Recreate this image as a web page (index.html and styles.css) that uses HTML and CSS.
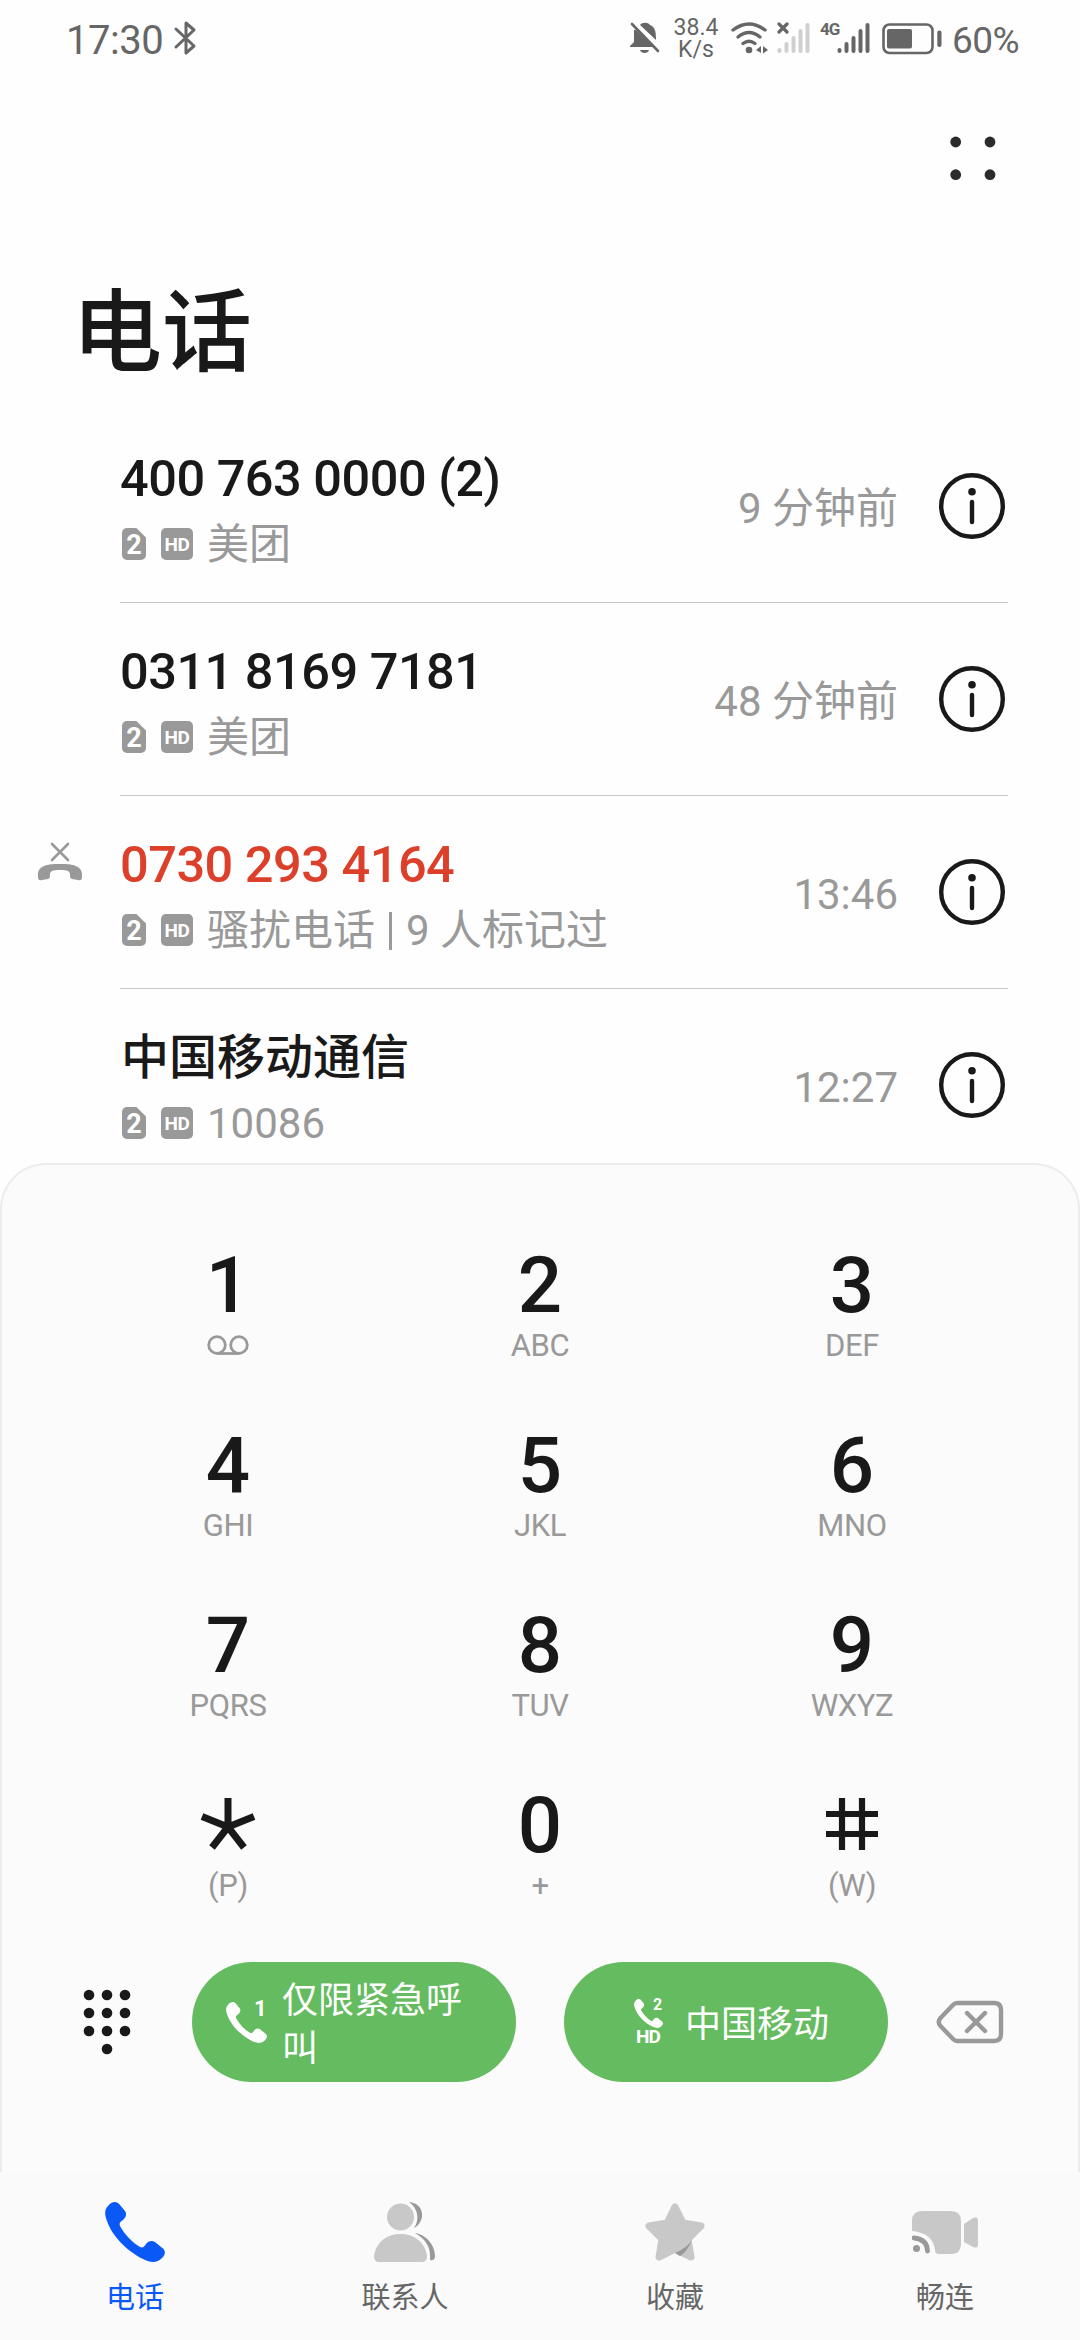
FILE: index.html
```html
<!DOCTYPE html>
<html lang="zh-CN">

<head>
    <meta charset="UTF-8">
    <meta name="viewport" content="width=device-width, initial-scale=1.0">
    <title>电话</title>
    <link rel="stylesheet" href="styles.css">
</head>

<body>
    <!-- shared icons -->
    <svg class="sprite" width="0" height="0">
        <symbol id="icon-info" viewBox="0 0 66 66">
            <circle cx="33" cy="33" r="30.8" fill="none" stroke="#191919" stroke-width="4.4" />
            <circle cx="33" cy="18.7" r="3.8" fill="#191919" />
            <path d="M33 29V49" stroke="#191919" stroke-width="4.4" stroke-linecap="round" />
        </symbol>
        <symbol id="icon-phone" viewBox="0 0 60 60">
            <path d="M3 4C7-1 12-1 15 3L20 9C22 12 21 15 18 18C15 20 14 21 15 24C20 33 27 40 35 45C38 46 39 45 41 42C43 39 47 38 50 40L56 45C61 48 61 52 57 56C52 61 46 61 38 57C22 49 7 34 2 19C-1 12 0 7 3 4Z" />
        </symbol>
    </svg>

    <div class="phone">
        <div class="status-bar">
            <span class="clock">17:30</span>
            <svg class="bluetooth" width="24" height="36" viewBox="0 0 24 36">
                <path d="M3 9L21 26L13 33V3L21 10L3 27" />
            </svg>
            <div class="status-right">
                <svg class="bell" width="30" height="32" viewBox="0 0 30 32">
                    <path d="M10 3C12 0 18 0 20 3C25 5 26 9 26 18L10 3ZM4 8C6 8 6 8 6 8L24 25H0V24L4 20Z" fill="#666" />
                    <path d="M2 2L28 29" stroke="#666" stroke-width="2.6" stroke-linecap="round" />
                    <path d="M10 28H19C18 32 11 32 10 28Z" fill="#666" />
                </svg>
                <div class="speed">
                    <div>38.4</div>
                    <div>K/s</div>
                </div>
                <svg class="wifi" width="38" height="32" viewBox="0 0 38 32">
                    <g fill="none" stroke="#666" stroke-width="3.4" stroke-linecap="round">
                        <path d="M2 8Q18 -4 34 8" />
                        <path d="M7 15Q18 6 29 15" />
                        <path d="M12 21.500Q18 17 24 21.500" />
                    </g>
                    <circle cx="18" cy="28" r="3.3" fill="#666" />
                    <path d="M30 24V31L25 28ZM32 24L37 28L32 31.500Z" fill="#666" />
                </svg>
                <svg class="signal-off" width="33" height="32" viewBox="0 0 33 32">
                    <path d="M2 2L10 10M10 2L2 10" stroke="#666" stroke-width="3.2" stroke-linecap="round" />
                    <path d="M2.500 28V29M9.500 22V29M16.500 16V29M23.500 9V29M30.500 3V29" stroke="#d0d0d0" stroke-width="4" stroke-linecap="round" />
                </svg>
                <span class="net">4G</span>
                <svg class="signal" width="33" height="32" viewBox="0 0 33 32">
                    <path d="M2.500 28V29M9.500 22V29M16.500 16V29M23.500 9V29M30.500 3V29" stroke="#666" stroke-width="4" stroke-linecap="round" />
                </svg>
                <svg class="battery" width="60" height="32" viewBox="0 0 60 32">
                    <rect x="1.500" y="1.500" width="49" height="28.500" rx="6" fill="none" stroke="#666" stroke-width="2.600" />
                    <rect x="5" y="6" width="25" height="19.500" rx="2" fill="#666" />
                    <rect x="55.300" y="7.500" width="4.200" height="16.500" rx="2" fill="#666" />
                </svg>
                <span class="percent">60%</span>
            </div>
        </div>

        <div class="toolbar">
            <svg width="46" height="46" viewBox="0 0 46 46" fill="#2b2b2b">
                <circle cx="5.700" cy="7" r="5.400" />
                <circle cx="40" cy="7" r="5.400" />
                <circle cx="5.700" cy="39.700" r="5.400" />
                <circle cx="40" cy="39.700" r="5.400" />
            </svg>
        </div>

        <h1>电话</h1>

        <div class="call-list">
            <div class="call">
                <div class="call-mark"></div>
                <div class="call-body">
                    <div class="call-text">
                        <div class="number">400 763 0000 (2)</div>
                        <div class="detail"><span class="sim">2</span><span class="hd">HD</span>美团</div>
                    </div>
                    <div class="time">9 分钟前</div>
                    <svg class="info" width="66" height="66"><use href="#icon-info" /></svg>
                </div>
            </div>
            <div class="call">
                <div class="call-mark"></div>
                <div class="call-body">
                    <div class="call-text">
                        <div class="number">0311 8169 7181</div>
                        <div class="detail"><span class="sim">2</span><span class="hd">HD</span>美团</div>
                    </div>
                    <div class="time">48 分钟前</div>
                    <svg class="info" width="66" height="66"><use href="#icon-info" /></svg>
                </div>
            </div>
            <div class="call">
                <div class="call-mark">
                    <svg width="46" height="40" viewBox="0 0 46 40">
                        <path d="M15 2L31 18M31 2L15 18" stroke="#999" stroke-width="2.600" stroke-linecap="round" />
                        <path d="M1 34C0 22 14 22 23 22C32 22 46 22 45 34C45 38 44 39 41 38L35 37C33 36 33 35 33 33C33 29 31 28 23 28C15 28 13 29 13 33C13 35 13 36 11 37L5 38C2 39 1 38 1 34Z" fill="#999" />
                    </svg>
                </div>
                <div class="call-body">
                    <div class="call-text">
                        <div class="number missed">0730 293 4164</div>
                        <div class="detail"><span class="sim">2</span><span class="hd">HD</span>骚扰电话<i class="bar"></i>9 人标记过</div>
                    </div>
                    <div class="time">13:46</div>
                    <svg class="info" width="66" height="66"><use href="#icon-info" /></svg>
                </div>
            </div>
            <div class="call">
                <div class="call-mark"></div>
                <div class="call-body">
                    <div class="call-text">
                        <div class="number name">中国移动通信</div>
                        <div class="detail"><span class="sim">2</span><span class="hd">HD</span>10086</div>
                    </div>
                    <div class="time">12:27</div>
                    <svg class="info" width="66" height="66"><use href="#icon-info" /></svg>
                </div>
            </div>
        </div>

        <div class="dialer">
            <div class="keypad">
                <div class="key">
                    <b>1</b>
                    <svg width="42" height="36" viewBox="0 0 42 36" fill="none" stroke="#999" stroke-width="2.800">
                        <circle cx="10" cy="17" r="8.300" />
                        <circle cx="32" cy="17" r="8.300" />
                        <path d="M10 25.500H32" />
                    </svg>
                </div>
                <div class="key"><b>2</b><span>ABC</span></div>
                <div class="key"><b>3</b><span>DEF</span></div>
                <div class="key"><b>4</b><span>GHI</span></div>
                <div class="key"><b>5</b><span>JKL</span></div>
                <div class="key"><b>6</b><span>MNO</span></div>
                <div class="key"><b>7</b><span>PQRS</span></div>
                <div class="key"><b>8</b><span>TUV</span></div>
                <div class="key"><b>9</b><span>WXYZ</span></div>
                <div class="key">
                    <svg class="symbol" width="60" height="84" viewBox="0 0 60 84" fill="none" stroke="#191919" stroke-width="7">
                        <path d="M30 44V15M30 44L4 33.500M30 44L56 33.500M30 44L14 64.500M30 44L46 64.500" />
                    </svg>
                    <span>(P)</span>
                </div>
                <div class="key"><b>0</b><span>+</span></div>
                <div class="key">
                    <svg class="symbol" width="60" height="84" viewBox="0 0 60 84" fill="none" stroke="#191919" stroke-width="6.200">
                        <path d="M20 15V67M40 15V67M4 31H56M4 51H56" />
                    </svg>
                    <span>(W)</span>
                </div>
            </div>

            <div class="actions">
                <svg class="hide-pad" width="48" height="66" viewBox="0 0 48 66" fill="#191919">
                    <circle cx="6" cy="6" r="5.300" /><circle cx="24" cy="6" r="5.300" /><circle cx="42" cy="6" r="5.300" />
                    <circle cx="6" cy="24" r="5.300" /><circle cx="24" cy="24" r="5.300" /><circle cx="42" cy="24" r="5.300" />
                    <circle cx="6" cy="42" r="5.300" /><circle cx="24" cy="42" r="5.300" /><circle cx="42" cy="42" r="5.300" />
                    <circle cx="24" cy="60" r="5.300" />
                </svg>
                <div class="dial-btn">
                    <div class="sim-one">
                        <svg width="41" height="41"><use href="#icon-phone" /></svg>
                        <span class="slot">1</span>
                    </div>
                    <p>仅限紧急呼叫</p>
                </div>
                <div class="dial-btn second">
                    <div class="sim-two">
                        <svg width="29" height="29"><use href="#icon-phone" /></svg>
                        <span class="slot">2</span>
                        <span class="volte">HD</span>
                    </div>
                    <p>中国移动</p>
                </div>
                <svg class="backspace" width="68" height="44" viewBox="0 0 68 44" fill="none" stroke="#999" stroke-width="4.400" stroke-linejoin="round" stroke-linecap="round">
                    <path d="M21 3H58Q65 3 65 10V34Q65 41 58 41H21Q19 41 17 39L4.500 26Q1 22 4.500 18L17 5Q19 3 21 3Z" />
                    <path d="M31 13L49 31M49 13L31 31" />
                </svg>
            </div>
        </div>

        <div class="tabs">
            <div class="tab active">
                <svg width="60" height="60"><use href="#icon-phone" /></svg>
                <span>电话</span>
            </div>
            <div class="tab">
                <svg width="62" height="62" viewBox="0 0 62 62">
                    <g fill="#999">
                        <path d="M35 0C51 1 52 20 40 26C46 18 44 6 35 0Z" />
                        <path d="M41 31C54 33 61 45 61 54Q61 59 56 58C57 46 53 38 41 31Z" />
                    </g>
                    <g fill="#c8c8c8">
                        <circle cx="26.500" cy="15" r="13.500" />
                        <path d="M0 54C2 40 13 32 26.500 32C40 32 51 40 53 54Q53 60 48 60H5Q0 60 0 54Z" />
                    </g>
                </svg>
                <span>联系人</span>
            </div>
            <div class="tab">
                <svg width="62" height="62" viewBox="0 0 62 62">
                    <path d="M31 5L39 21L57 24L44 37L47 55L31 47L15 55L18 37L5 24L23 21Z" fill="#c8c8c8" stroke="#c8c8c8" stroke-width="7" stroke-linejoin="round" />
                    <path d="M48 38Q43 46 31 51L36 54Q43 50 48 38Z" fill="#999" />
                </svg>
                <span>收藏</span>
            </div>
            <div class="tab">
                <svg width="66" height="62" viewBox="0 0 66 62">
                    <path d="M0 29V19Q0 9 10 9H39Q49 9 49 19V42Q49 52 39 52H27Q23 52 23 48Q21 31 0 29Z" fill="#c8c8c8" />
                    <path d="M52 22L61 16Q66 14 66 19V42Q66 47 61 45L52 40Z" fill="#c8c8c8" />
                    <path d="M2 36Q15 37 15.500 49" fill="none" stroke="#999" stroke-width="4.800" stroke-linecap="round" />
                    <circle cx="4.500" cy="46.500" r="3.500" fill="#999" />
                </svg>
                <span>畅连</span>
            </div>
        </div>
    </div>
</body>

</html>
```
FILE: styles.css
```css
* {
    box-sizing: border-box;
}

body {
    margin: 0;
    background-color: #fefefe;
    color: #191919;
    font-family: Roboto, "Noto Sans CJK SC", sans-serif;
}

svg {
    display: block;
    flex-shrink: 0;
}

.sprite {
    display: none;
}

.phone {
    width: 1080px;
    height: 2340px;
    overflow: hidden;
    display: flex;
    flex-direction: column;
}

/* status bar */
.status-bar {
    display: flex;
    align-items: flex-start;
    height: 80px;
    padding: 20px 60px 0 66px;
    color: #666;
}

.clock {
    width: 107px;
    padding-top: 1px;
    font-size: 40px;
    line-height: 40px;
    letter-spacing: -0.5px;
}

.bluetooth {
    fill: none;
    stroke: #666;
    stroke-width: 3;
    stroke-linejoin: round;
    stroke-linecap: round;
}

.status-right {
    display: flex;
    margin-left: auto;
    padding-top: 2px;
}

.speed {
    width: 46px;
    margin: -5px 12px 0 13px;
    font-size: 23px;
    line-height: 22px;
    text-align: center;
}

.signal-off {
    margin-left: 8px;
}

.net {
    width: 20px;
    margin-left: 10px;
    margin-right: -3px;
    font-size: 17px;
    line-height: 14px;
    font-weight: 700;
    letter-spacing: -1px;
}

.battery {
    margin: 1px 10px 0 12px;
}

.percent {
    width: 68px;
    padding-top: 1px;
    font-size: 37px;
    line-height: 36px;
    letter-spacing: -0.5px;
}

/* header */
.toolbar {
    display: flex;
    justify-content: flex-end;
    height: 170px;
    padding: 55px 84px 0 0;
}

h1 {
    height: 160px;
    margin: 0;
    padding: 24px 0 0 72px;
    font-size: 90px;
    line-height: 120px;
    font-weight: 500;
}

/* recent calls */
.call-list {
    height: 753px;
    overflow: hidden;
}

.call {
    display: flex;
    height: 193px;
}

.call-mark {
    width: 120px;
    padding: 46px 0 0 37px;
}

.call-body {
    display: flex;
    align-items: center;
    width: 888px;
    padding-right: 3px;
    border-bottom: 1px solid #c8c8c8;
}

.call-text {
    flex: 1;
    padding-top: 12px;
}

.number {
    font-size: 50.5px;
    line-height: 60px;
    font-weight: 500;
    letter-spacing: -0.5px;
    white-space: nowrap;
}

.name {
    padding-left: 1px;
    font-size: 48px;
    letter-spacing: 0;
}

.missed {
    color: #dc402b;
}

.detail {
    display: flex;
    align-items: center;
    height: 60px;
    margin-top: 6px;
    color: #999;
    font-size: 42px;
    line-height: 60px;
    white-space: nowrap;
}

.sim,
.hd {
    height: 32px;
    margin-top: -2px;
    border-radius: 5px;
    background-color: #999;
    color: #fff;
    font-weight: 700;
    text-align: center;
}

.sim {
    width: 24px;
    margin-left: 2px;
    margin-right: 15px;
    clip-path: polygon(0 0, 60% 0, 100% 30%, 100% 100%, 0 100%);
    font-size: 27px;
    line-height: 34px;
}

.hd {
    width: 32px;
    margin-right: 14px;
    font-size: 19px;
    line-height: 33px;
    letter-spacing: -0.5px;
}

.bar {
    width: 3px;
    height: 38px;
    margin: 0 14px;
    background-color: #999;
}

.time {
    padding-top: 6px;
    color: #999;
    font-size: 42px;
    line-height: 60px;
}

.info {
    margin-left: 41px;
}

/* dial panel */
.dialer {
    height: 1009px;
    padding: 70px 70px 0;
    border: 2px solid #ececec;
    border-bottom: 0;
    border-radius: 46px 46px 0 0;
    background-color: #fbfbfb;
}

.keypad {
    display: grid;
    grid-template-columns: repeat(3, 312px);
    grid-auto-rows: 180px;
}

.key {
    display: flex;
    flex-direction: column;
    align-items: center;
}

.key b {
    height: 93px;
    font-size: 78px;
    line-height: 101px;
    font-weight: 500;
}

.key .symbol {
    margin: 8px 0 1px;
}

.key span {
    color: #999;
    font-size: 31px;
    line-height: 36px;
    font-weight: 400;
    letter-spacing: -0.4px;
}

.actions {
    display: flex;
    align-items: center;
    height: 120px;
    margin-top: 7px;
}

.hide-pad {
    margin: 0 61px 0 11px;
}

.dial-btn {
    display: flex;
    align-items: center;
    flex-shrink: 0;
    width: 324px;
    height: 120px;
    padding-left: 34px;
    border-radius: 60px;
    background-color: #65bb5f;
    color: #fff;
    fill: #fff;
}

.dial-btn p {
    width: 190px;
    margin: 0;
    padding-top: 6px;
    font-size: 36px;
    line-height: 48px;
}

.second {
    margin-left: 48px;
    padding-left: 70px;
}

.sim-one,
.sim-two {
    position: relative;
}

.sim-one {
    width: 56px;
}

.sim-two {
    width: 51px;
}

/* slot number sits over the corner of the handset */
.slot {
    position: absolute;
    top: -4px;
    left: 28px;
    font-size: 22px;
    line-height: 22px;
    font-weight: 700;
}

.sim-two .slot {
    left: 19px;
    font-size: 16px;
    line-height: 20px;
}

.volte {
    display: block;
    width: 28px;
    font-size: 19px;
    line-height: 18px;
    font-weight: 700;
    letter-spacing: -1px;
    text-align: center;
}

.backspace {
    margin-left: 48px;
}

/* bottom tabs */
.tabs {
    display: flex;
    height: 168px;
    padding-top: 30px;
    background-color: #fafafa;
}

.tab {
    display: flex;
    flex: 1;
    flex-direction: column;
    align-items: center;
    color: #666;
    font-size: 29px;
    line-height: 36px;
}

.tab svg {
    height: 62px;
    margin-bottom: 16px;
}

.tab:first-child svg {
    height: 60px;
    margin-bottom: 18px;
}

.active {
    color: #0a59f7;
    fill: #0a59f7;
}
```
